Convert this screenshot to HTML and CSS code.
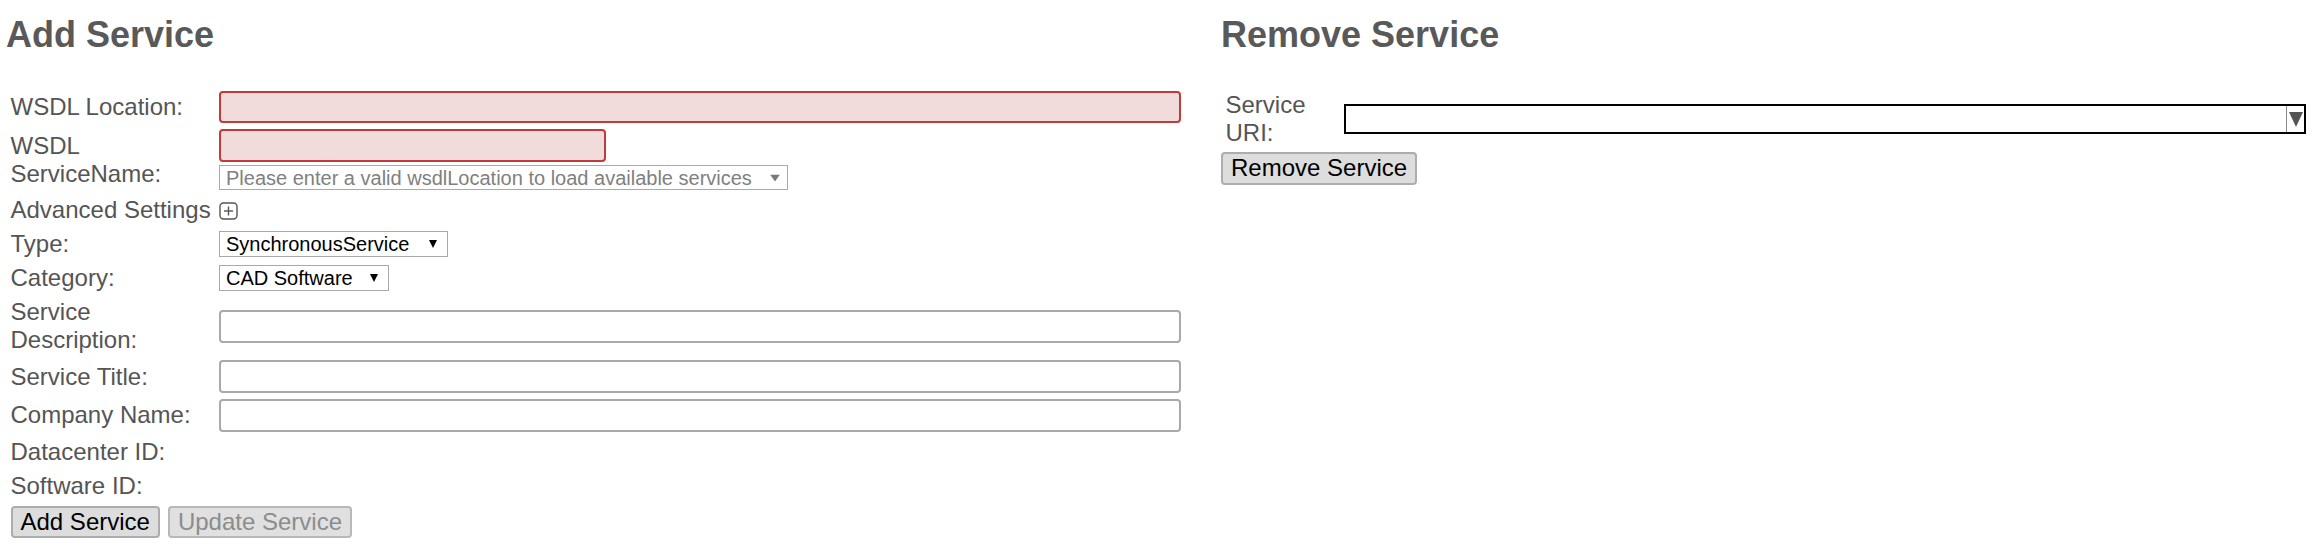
FILE: index.html
```html
<!DOCTYPE html>
<html lang="en">
<head>
<meta charset="utf-8">
<title>Service Management</title>
<link rel="stylesheet" href="styles.css">
</head>
<body>
<div class="page">
  <section class="panel">
    <h2 class="title">Add Service</h2>
    <form class="form form-add">
      <label class="lbl">WSDL Location:</label>
      <div class="field"><input type="text" class="txt txt-error txt-wide"></div>

      <label class="lbl">WSDL ServiceName:</label>
      <div class="field field-stack">
        <input type="text" class="txt txt-error txt-name">
        <span class="sel-wrap">
          <select class="sel sel-placeholder"><option>Please enter a valid wsdlLocation to load available services</option></select>
          <svg class="caret caret-gray" width="10" height="7" viewBox="0 0 10 7"><polygon points="0,0 10,0 5,7"/></svg>
        </span>
      </div>

      <div class="lbl lbl-nowrap">Advanced Settings</div>
      <div class="field">
        <svg class="plus-box" width="19" height="18" viewBox="0 0 19 18"><rect x="1" y="1" width="17" height="16" rx="3.5"/><line x1="5" y1="9" x2="14" y2="9"/><line x1="9.5" y1="4.5" x2="9.5" y2="13.5"/></svg>
      </div>

      <label class="lbl">Type:</label>
      <div class="field">
        <span class="sel-wrap">
          <select class="sel sel-type"><option>SynchronousService</option></select>
          <svg class="caret" width="8" height="8" viewBox="0 0 8 8"><polygon points="0,0 8,0 4,8"/></svg>
        </span>
      </div>

      <label class="lbl">Category:</label>
      <div class="field">
        <span class="sel-wrap">
          <select class="sel sel-category"><option>CAD Software</option></select>
          <svg class="caret" width="8" height="8" viewBox="0 0 8 8"><polygon points="0,0 8,0 4,8"/></svg>
        </span>
      </div>

      <label class="lbl">Service Description:</label>
      <div class="field"><input type="text" class="txt txt-wide"></div>

      <label class="lbl">Service Title:</label>
      <div class="field"><input type="text" class="txt txt-wide"></div>

      <label class="lbl">Company Name:</label>
      <div class="field"><input type="text" class="txt txt-wide"></div>

      <div class="lbl">Datacenter ID:</div>
      <div class="lbl">Software ID:</div>

      <div class="actions">
        <button type="button" class="btn">Add Service</button>
        <button type="button" class="btn" disabled>Update Service</button>
      </div>
    </form>
  </section>

  <section class="panel">
    <h2 class="title">Remove Service</h2>
    <form class="form form-remove">
      <label class="lbl">Service URI:</label>
      <div class="field">
        <span class="sel-wrap">
          <select class="uri-select"><option></option></select>
          <span class="uri-arrow"><svg width="14" height="15" viewBox="0 0 14 15"><polygon points="0,0 14,0 7,15"/></svg></span>
        </span>
      </div>
    </form>
    <button type="button" class="btn btn-remove">Remove Service</button>
  </section>
</div>
</body>
</html>
```

FILE: styles.css
```css
* {
  box-sizing: border-box;
}

body {
  margin: 0;
  background: #ffffff;
  color: #555555;
  font-family: "Liberation Sans", Arial, sans-serif;
  font-size: 24px;
}

.page {
  display: grid;
  grid-template-columns: 1180px 1fr;
  column-gap: 35px;
  padding: 0 6px;
}

.title {
  margin: 13.5px 0 35px;
  font-size: 36px;
  font-weight: bold;
  line-height: normal;
  color: #595959;
}

.form {
  display: grid;
  column-gap: 6px;
  row-gap: 6px;
  align-items: center;
  padding-left: 4.5px;
}

.form-add {
  grid-template-columns: 202.5px 963px;
  margin-top: 1px;
}

.form-remove {
  grid-template-columns: 112.8px 962px;
}

.lbl {
  grid-column: 1;
  line-height: normal;
}

.lbl-nowrap {
  white-space: nowrap;
}

.field {
  grid-column: 2;
  display: flex;
  align-items: center;
}

.field-stack {
  flex-direction: column;
  align-items: flex-start;
  gap: 3.8px;
}

.txt {
  height: 32.6px;
  border: 2px solid #a9a9a9;
  border-radius: 4px;
  background: #ffffff;
  font: inherit;
  padding: 0 6px;
  outline: none;
}

.txt-wide {
  width: 962px;
}

.txt-name {
  width: 387px;
}

.txt-error {
  border-color: #c23b3b;
  background: #f2dbdb;
}

.sel-wrap {
  position: relative;
  display: inline-block;
}

.sel {
  display: block;
  height: 26px;
  padding: 0 24px 0 6px;
  border: 1px solid #a9a9a9;
  border-radius: 0;
  background: #ffffff;
  color: #000000;
  font-family: "Liberation Sans", Arial, sans-serif;
  font-size: 20px;
  -webkit-appearance: none;
  appearance: none;
  outline: none;
}

.sel-placeholder {
  width: 569px;
  height: 25px;
  color: #808080;
}

.sel-type {
  width: 229px;
}

.sel-category {
  width: 170px;
}

.caret {
  position: absolute;
  right: 11px;
  top: 50%;
  transform: translateY(-50%);
  fill: #000000;
  pointer-events: none;
}

.caret-gray {
  right: 8px;
  fill: #7a7a7a;
}

.plus-box {
  display: block;
  margin-top: 1px;
  fill: none;
  stroke: #555555;
  stroke-width: 1.4;
}

.actions {
  grid-column: 1 / -1;
  display: flex;
  gap: 8px;
}

.btn {
  height: 32.6px;
  padding: 0 8px;
  border: 2px solid #adadad;
  border-radius: 4px;
  background: #dddddd;
  color: #000000;
  font-family: "Liberation Sans", Arial, sans-serif;
  font-size: 24px;
  line-height: normal;
}

.btn:disabled {
  color: #8c8c8c;
  border-color: #b8b8b8;
  background: #e0e0e0;
}

.btn-remove {
  margin-top: 5.5px;
}

.uri-select {
  display: block;
  width: 962px;
  height: 30px;
  border: 2px solid #000000;
  border-radius: 0;
  background: #ffffff;
  -webkit-appearance: none;
  appearance: none;
  outline: none;
}

.uri-arrow {
  position: absolute;
  top: 2px;
  right: 2px;
  bottom: 2px;
  width: 18px;
  border-left: 1px solid #8a8a8a;
  display: flex;
  align-items: center;
  justify-content: center;
  padding-top: 1px;
  fill: #555555;
  pointer-events: none;
}

.uri-arrow svg {
  display: block;
}
```
